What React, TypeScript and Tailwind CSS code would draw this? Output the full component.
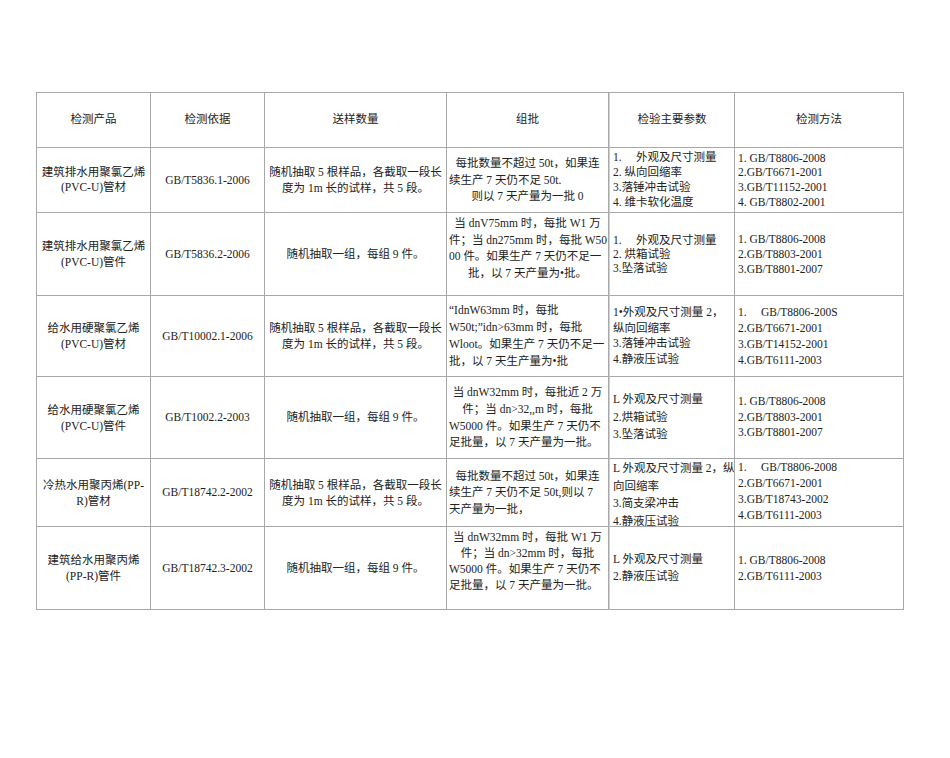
type Line = { t: string; a?: "l" | "c" };
type Cell = { lines: Line[]; lh: string; top?: string };

const c = (t: string): Line => ({ t, a: "c" });
const l = (t: string): Line => ({ t, a: "l" });

const header = ["检测产品", "检测依据", "送样数量", "组批", "检验主要参数", "检测方法"];

const sample5 = [c("随机抽取 5 根样品，各截取一段长"), c("度为 1m 长的试样，共 5 段。")];
const sample9 = [c("随机抽取一组，每组 9 件。")];

// each row: product, standard, sample size, batch, parameters, methods
const rows: Cell[][] = [
  [
    { lines: [c("建筑排水用聚氯乙烯"), c("(PVC-U)管材")], lh: "leading-[15px]" },
    { lines: [c("GB/T5836.1-2006")], lh: "leading-[15px]" },
    { lines: sample5, lh: "leading-[16px]" },
    {
      lines: [c("每批数量不超过 50t，如果连"), l("续生产 7 天仍不足 50t."), c("则以 7 天产量为一批 0")],
      lh: "leading-[16.5px]",
    },
    {
      lines: [l("1.     外观及尺寸测量"), l("2. 纵向回缩率"), l("3.落锤冲击试验"), l("4. 维卡软化温度")],
      lh: "leading-[15px]",
    },
    {
      lines: [l("1. GB/T8806-2008"), l("2.GB/T6671-2001"), l("3.GB/T11152-2001"), l("4. GB/T8802-2001")],
      lh: "leading-[14.7px]",
    },
  ],
  [
    { lines: [c("建筑排水用聚氯乙烯"), c("(PVC-U)管件")], lh: "leading-[16px]" },
    { lines: [c("GB/T5836.2-2006")], lh: "leading-[15px]" },
    { lines: sample9, lh: "leading-[15px]" },
    {
      lines: [
        c("当 dnV75mm 时，每批 W1 万"),
        l("件；当 dn275mm 时，每批 W50"),
        l("00 件。如果生产 7 天仍不足一"),
        c("批，以 7 天产量为•批。"),
      ],
      lh: "leading-[16.7px]",
      top: "justify-start pt-[2px]",
    },
    { lines: [l("1.     外观及尺寸测量"), l("2. 烘箱试验"), l("3.坠落试验")], lh: "leading-[14px]" },
    { lines: [l("1. GB/T8806-2008"), l("2.GB/T8803-2001"), l("3.GB/T8801-2007")], lh: "leading-[15px]" },
  ],
  [
    { lines: [c("给水用硬聚氯乙烯"), c("(PVC-U)管材")], lh: "leading-[16px]" },
    { lines: [c("GB/T10002.1-2006")], lh: "leading-[15px]" },
    { lines: sample5, lh: "leading-[16px]" },
    {
      lines: [
        l("“IdnW63mm 时，每批"),
        l("W50t;”idn>63mm 时，每批"),
        l("Wloot。如果生产 7 天仍不足一"),
        l("批，以 7 天生产量为•批"),
      ],
      lh: "leading-[17px]",
    },
    {
      lines: [l("1•外观及尺寸测量 2，"), l("纵向回缩率"), l("3.落锤冲击试验"), l("4.静液压试验")],
      lh: "leading-[15.5px]",
    },
    {
      lines: [l("1.     GB/T8806-200S"), l("2.GB/T6671-2001"), l("3.GB/T14152-2001"), l("4.GB/T6111-2003")],
      lh: "leading-[16px]",
    },
  ],
  [
    { lines: [c("给水用硬聚氯乙烯"), c("(PVC-U)管件")], lh: "leading-[16px]" },
    { lines: [c("GB/T1002.2-2003")], lh: "leading-[15px]" },
    { lines: sample9, lh: "leading-[15px]" },
    {
      lines: [
        c("当 dnW32mm 时，每批近 2 万"),
        c("件；当 dn>32,,m 时，每批"),
        l("W5000 件。如果生产 7 天仍不"),
        l("足批量，以 7 天产量为一批。"),
      ],
      lh: "leading-[16.7px]",
    },
    { lines: [l("L 外观及尺寸测量"), l("2.烘箱试验"), l("3.坠落试验")], lh: "leading-[17.5px]" },
    { lines: [l("1. GB/T8806-2008"), l("2.GB/T8803-2001"), l("3.GB/T8801-2007")], lh: "leading-[15.5px]" },
  ],
  [
    { lines: [c("冷热水用聚丙烯(PP-"), c("R)管材")], lh: "leading-[16px]" },
    { lines: [c("GB/T18742.2-2002")], lh: "leading-[15px]" },
    { lines: sample5, lh: "leading-[16px]" },
    {
      lines: [c("每批数量不超过 50t，如果连"), l("续生产 7 天仍不足 50t,则以 7"), l("天产量为一批，")],
      lh: "leading-[16.5px]",
    },
    {
      lines: [l("L 外观及尺寸测量 2，纵"), l("向回缩率"), l("3.简支梁冲击"), l("4.静液压试验")],
      lh: "leading-[17.5px]",
      top: "justify-start pt-px",
    },
    {
      lines: [l("1.     GB/T8806-2008"), l("2.GB/T6671-2001"), l("3.GB/T18743-2002"), l("4.GB/T6111-2003")],
      lh: "leading-[16px]",
      top: "justify-start pt-0",
    },
  ],
  [
    { lines: [c("建筑给水用聚丙烯"), c("(PP-R)管件")], lh: "leading-[16px]" },
    { lines: [c("GB/T18742.3-2002")], lh: "leading-[15px]" },
    { lines: sample9, lh: "leading-[15px]" },
    {
      lines: [
        c("当 dnW32mm 时，每批 W1 万"),
        c("件；当 dn>32mm 时，每批"),
        l("W5000 件。如果生产 7 天仍不"),
        l("足批量，以 7 天产量为一批。"),
      ],
      lh: "leading-[16px]",
      top: "justify-start pt-[2px]",
    },
    { lines: [l("L 外观及尺寸测量"), l("2.静液压试验")], lh: "leading-[17px]" },
    { lines: [l("1. GB/T8806-2008"), l("2.GB/T6111-2003")], lh: "leading-[16px]" },
  ],
];

const cellBase = "flex flex-col overflow-hidden border-r border-b border-[#a8a8a8]";

function GridCell({ cell, col }: { cell: Cell; col: number }) {
  const pad = col >= 4 ? "px-[3px]" : "px-[2px]";
  const sep = col === 4 ? "border-l border-l-[#d0d0d0]" : "";
  return (
    <div className={`${cellBase} ${pad} ${sep} ${cell.top ?? "justify-center"}`}>
      {cell.lines.map((ln, i) => (
        <div key={i} className={`whitespace-pre ${cell.lh} ${ln.a === "l" ? "text-left" : "text-center"}`}>
          {ln.t}
        </div>
      ))}
    </div>
  );
}

export default function App() {
  return (
    <div className="min-h-[758px] w-[950px] bg-white pl-[36px] pt-[92px] font-['Liberation_Serif','Noto_Sans_CJK_SC',serif] text-[11.5px] text-[#222]">
      <div className="grid w-[868px] grid-cols-[114px_114px_182px_162px_126px_169px] grid-rows-[55px_65px_83px_81px_82px_68px_83px] border-l border-t border-[#a8a8a8]">
        {header.map((h, i) => (
          <div
            key={h}
            className={`${cellBase} items-center justify-center ${i === 4 ? "border-l border-l-[#d0d0d0]" : ""}`}
          >
            {h}
          </div>
        ))}
        {rows.map((r, ri) =>
          r.map((cell, ci) => <GridCell key={`${ri}-${ci}`} cell={cell} col={ci} />)
        )}
      </div>
    </div>
  );
}
